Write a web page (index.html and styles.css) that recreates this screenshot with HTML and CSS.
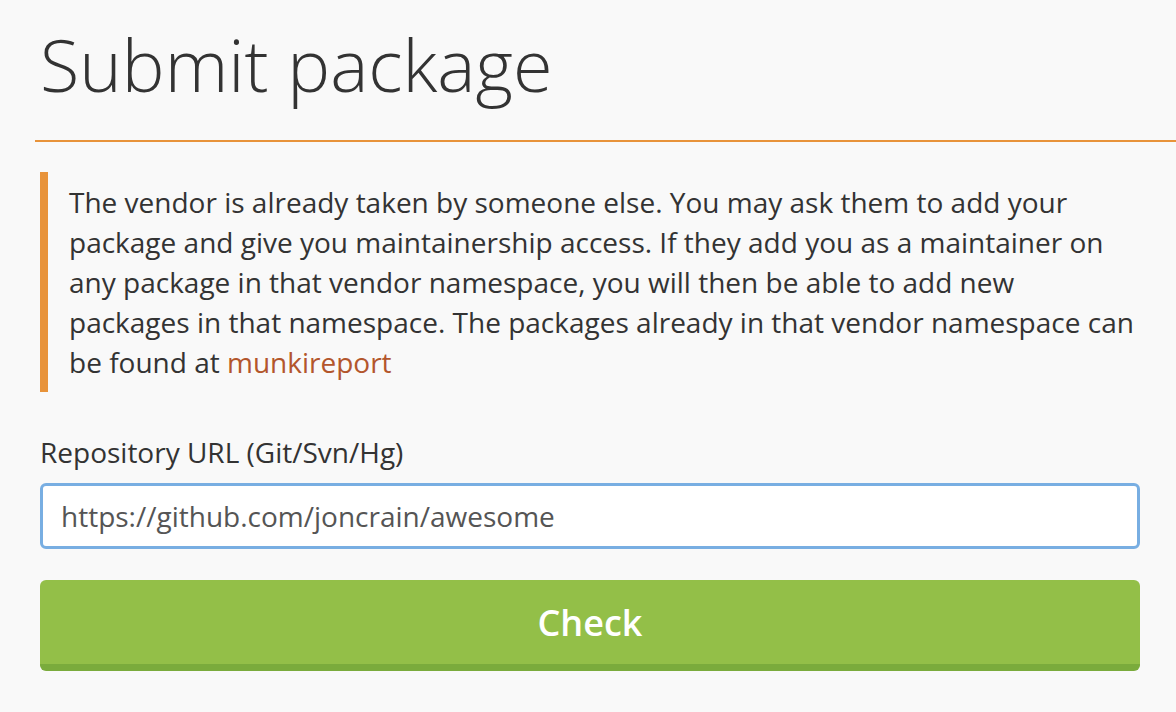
FILE: index.html
```html
<!DOCTYPE html>
<html>
<head>
<meta charset="utf-8">
<title>Submit package</title>
<link rel="stylesheet" href="styles.css">
</head>
<body>
<div class="page">
  <div class="header">
    <h1 class="title">Submit package</h1>
  </div>
  <div class="content">
    <div class="alert">The vendor is already taken by someone else. You may ask them to add your package and give you maintainership access. If they add you as a maintainer on any package in that vendor namespace, you will then be able to add new packages in that namespace. The packages already in that vendor namespace can be found at <a class="link" href="#">munkireport</a></div>
    <form class="form">
      <label class="label" for="url">Repository URL (Git/Svn/Hg)</label>
      <input class="input" id="url" type="text" value="https://github.com/joncrain/awesome">
      <button class="button" type="button">Check</button>
    </form>
  </div>
</div>
</body>
</html>
```

FILE: styles.css
```css
html, body {
  margin: 0;
  padding: 0;
  background: #f9f9f9;
}
body {
  font-family: "Open Sans", "DejaVu Sans", sans-serif;
  color: #333;
}
.page {
  display: flex;
  flex-direction: column;
}
.header {
  margin-left: 35px;
  padding: 24px 0 36px 5px;
  border-bottom: 2px solid #e8933a;
}
.title {
  margin: 0;
  font-size: 72px;
  font-weight: 300;
  line-height: 80px;
  color: #333;
}
.content {
  margin-left: 40px;
  width: 1100px;
  padding-top: 30px;
  display: flex;
  flex-direction: column;
}
.alert {
  border-left: 8px solid #e8933a;
  padding: 10px 0 10px 21px;
  font-size: 28px;
  line-height: 40px;
  color: #333;
}
.link {
  color: #b3562c;
  text-decoration: none;
}
.form {
  display: flex;
  flex-direction: column;
  margin-top: 40px;
}
.label {
  font-size: 28px;
  line-height: 40px;
  color: #333;
}
.input {
  margin-top: 11px;
  box-sizing: border-box;
  height: 66px;
  border: 3px solid #78aee2;
  border-radius: 6px;
  background: #fff;
  padding: 0 18px;
  font-family: "Open Sans", "DejaVu Sans", sans-serif;
  font-size: 28px;
  color: #555;
  outline: none;
}
.button {
  margin-top: 31px;
  box-sizing: border-box;
  height: 91px;
  border: 0;
  border-bottom: 7px solid #7aab3c;
  border-radius: 6px;
  background: #93bf48;
  color: #fff;
  font-family: "Open Sans", "DejaVu Sans", sans-serif;
  font-size: 36px;
  font-weight: 600;
  padding: 0;
}
```
